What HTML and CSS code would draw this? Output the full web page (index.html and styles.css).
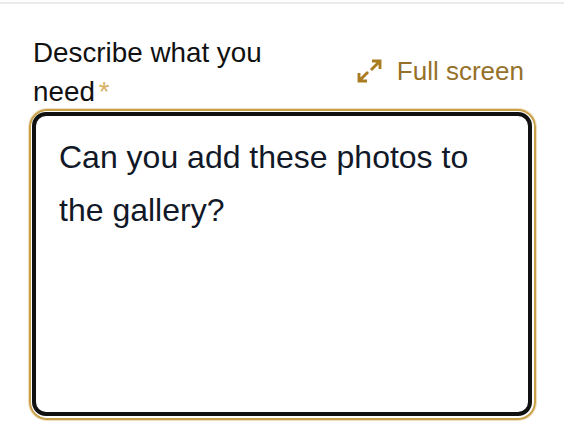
FILE: index.html
```html
<!DOCTYPE html>
<html lang="en">
<head>
  <meta charset="UTF-8" />
  <title>Describe what you need</title>
  <link rel="stylesheet" href="styles.css">
</head>
<body>
  <div class="field">
    <div class="field-header">
      <label class="field-label" for="need">Describe what you need<span class="required">*</span></label>
      <button class="fullscreen-btn" type="button">
        <svg class="fullscreen-icon" viewBox="0 0 26 26" width="26" height="26" fill="none" stroke="currentColor" stroke-width="2.9">
          <path d="M15 3h8v8M23 3l-9 9M2 15v8h8M2 23l9-9" />
        </svg>
        Full screen
      </button>
    </div>
    <div class="focus-ring">
      <textarea class="need-input" id="need">Can you add these photos to the gallery?</textarea>
    </div>
  </div>
</body>
</html>
```

FILE: styles.css
```css
* {
  box-sizing: border-box;
}

body {
  margin: 0;
  height: 432px;
  padding-top: 2px;
  overflow: hidden;
  background: #fff;
  font-family: "Liberation Sans", Arial, sans-serif;
}

.field {
  padding: 30px 28px 0 29px;
  border-top: 2px solid #ebebeb;
}

.field-header {
  display: flex;
  align-items: center;
  justify-content: space-between;
  margin-bottom: -2px;
  padding: 0 12px 0 4px;
}

.field-label {
  width: 270px;
  font-size: 27.8px;
  line-height: 38.5px;
  color: #111;
}

.required {
  margin-left: 4px;
  color: #d9b064;
}

.fullscreen-btn {
  display: flex;
  align-items: center;
  gap: 14px;
  margin-bottom: 3px;
  padding: 0;
  border: none;
  background: none;
  font: inherit;
  font-size: 26px;
  color: #96712a;
}

.fullscreen-icon {
  color: #a97c22;
}

.focus-ring {
  padding: 1px 2px 2px 1px;
  border: 2px solid #c8a04a;
  border-radius: 18px;
  box-shadow: 0 0 0 1px #f0dfba;
}

.need-input {
  display: block;
  width: 100%;
  height: 304px;
  padding: 15px 23px;
  border: 4px solid #111;
  border-radius: 14px;
  outline: none;
  resize: none;
  font-family: inherit;
  font-size: 32px;
  line-height: 53px;
  color: #111827;
}
```
